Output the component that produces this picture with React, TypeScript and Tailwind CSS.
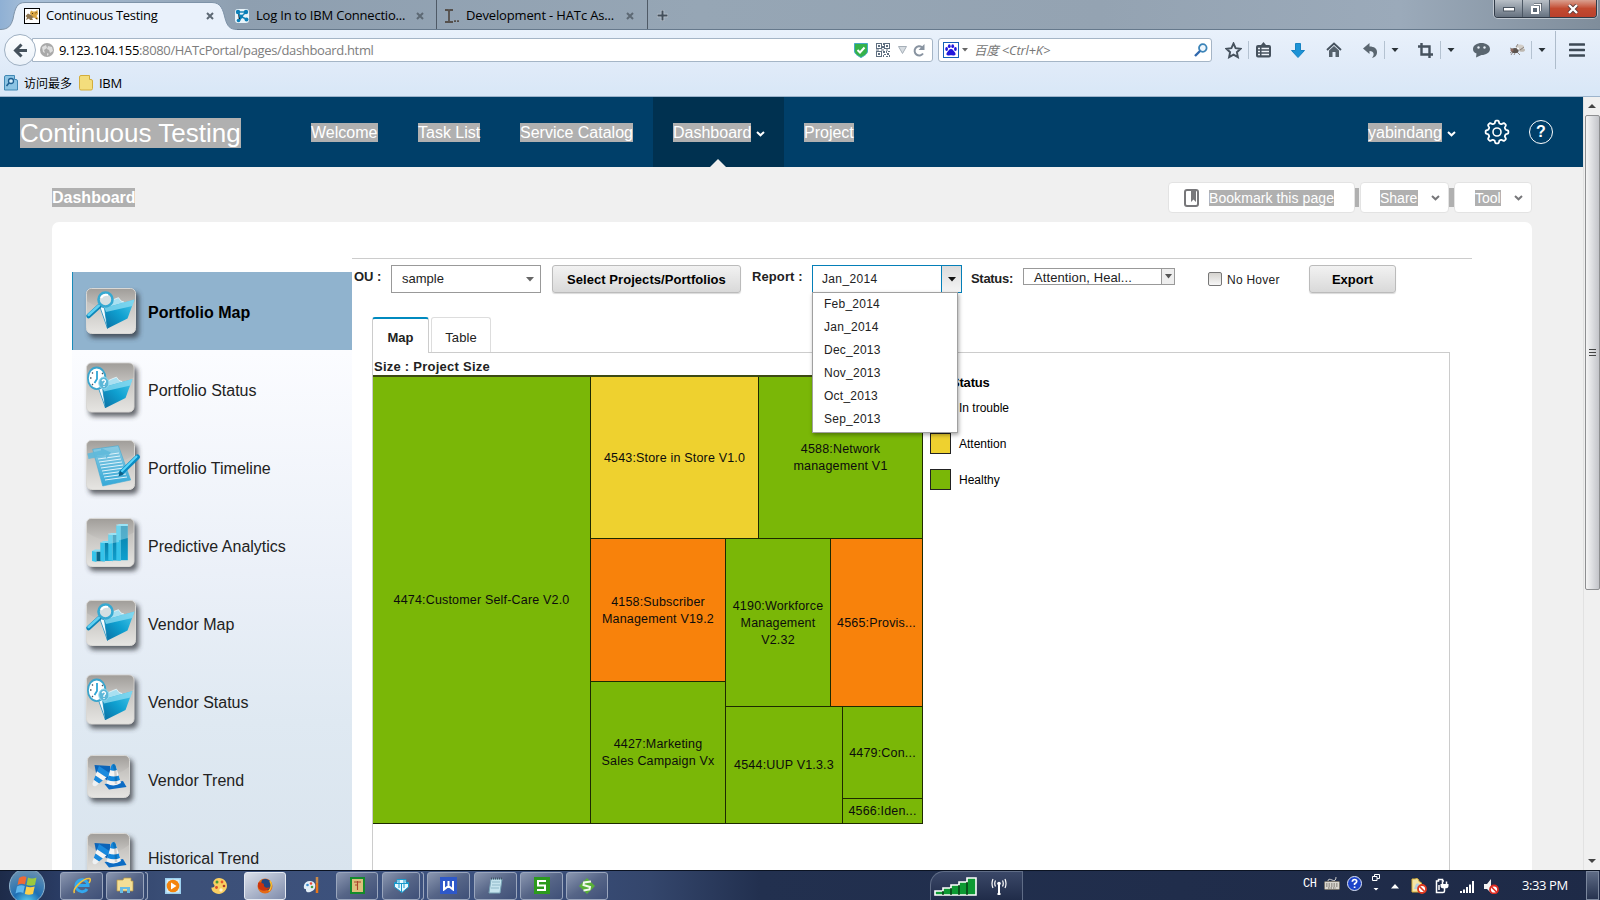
import React from "react";

const UI = "font-['Open_Sans','Noto_Sans_CJK_SC',sans-serif]";

/* ---------- Browser chrome ---------- */

function CloseX() {
  return (
    <svg width="8" height="8" viewBox="0 0 8 8" className="shrink-0">
      <path d="M1 1L7 7M7 1L1 7" stroke="#5d6974" strokeWidth="2" />
    </svg>
  );
}

function CatIcon() {
  return (
    <svg width="16" height="16" viewBox="0 0 16 16" className="shrink-0">
      <rect x=".5" y=".5" width="15" height="15" fill="#fff" stroke="#000" />
      <path d="M6 5L7 2.500L9 3.500H11L13.500 2L14 6L12.500 8L14.500 11H12L10 9.500L7 8.500Z" fill="#d9a441" />
      <path d="M1.500 8L4 5.500L7 7L10 9.500L8 10L9 12H6L5 10.500L2 12L3 9.500Z" fill="#8d7550" />
      <path d="M8 5L9 6M11.500 5L12.500 4.500M12 10L13 11.500" stroke="#4f3817" />
    </svg>
  );
}

function ConnectionsIcon() {
  return (
    <svg width="14" height="14" viewBox="0 0 14 14" className="shrink-0">
      <rect width="14" height="14" rx="3" fill="#e9f4fa" />
      <path d="M3 3L11 3M3 3L6 9L4 12M6 8L11 3M7 8L11 10" stroke="#1b86b8" strokeWidth="1.5" />
      <g fill="#0a7fb8">
        <circle cx="3" cy="3" r="2.2" />
        <circle cx="11" cy="3" r="2.2" />
        <circle cx="6" cy="7.5" r="2" />
        <circle cx="3.5" cy="11.5" r="1.8" />
        <circle cx="11.5" cy="10.5" r="2" />
      </g>
    </svg>
  );
}

function CursorIcon() {
  return (
    <svg width="15" height="14" viewBox="0 0 15 14" className="shrink-0">
      <path d="M0 1H3L4 2L5 1H8M4 2V12M0 13H3L4 12L5 13H8" stroke="#55504c" strokeWidth="1.8" fill="none" />
      <path d="M9 12.2H11M12 12.2H14" stroke="#55504c" strokeWidth="1.8" />
    </svg>
  );
}

function WindowControls() {
  return (
    <div className="mr-[3px] flex h-[18px] w-[103px] overflow-hidden rounded-b-[4px] border border-t-0 border-[#303b48] shadow-[0_0_0_1px_rgba(255,255,255,0.45)]">
      <div className="flex w-[28px] items-center justify-center border-r border-[#4c5764] bg-linear-to-b from-[#b9c0c7] via-[#8e98a3] to-[#66717f]">
        <svg width="12" height="6" viewBox="0 0 12 6"><rect x=".5" y="1.5" width="11" height="3.5" fill="#fff" stroke="#4a5460" /></svg>
      </div>
      <div className="flex w-[27px] items-center justify-center border-r border-[#4c5764] bg-linear-to-b from-[#b9c0c7] via-[#8e98a3] to-[#66717f]">
        <svg width="12" height="12" viewBox="0 0 12 12">
          <path d="M4 1.5H10.5V8" fill="none" stroke="#4a5460" strokeWidth="3" />
          <path d="M4 1.5H10.5V8" fill="none" stroke="#fff" strokeWidth="1.3" />
          <rect x="2" y="4" width="6" height="6" fill="#5a6674" stroke="#fff" strokeWidth="2" />
        </svg>
      </div>
      <div className="flex flex-1 items-center justify-center bg-linear-to-b from-[#d9a090] via-[#c24a30] to-[#b9402c]">
        <svg width="12" height="10" viewBox="0 0 12 10">
          <path d="M2 1L10 9M10 1L2 9" stroke="#5c3a3a" strokeWidth="4" />
          <path d="M2 1L10 9M10 1L2 9" stroke="#fff" strokeWidth="2.4" />
        </svg>
      </div>
    </div>
  );
}

function TabStrip() {
  return (
    <div className={`${UI} flex h-[30px] items-start border-b border-[#66798c] bg-[linear-gradient(90deg,#8fb0d4_0px,#a9c0d8_30px,#8e9fb0_240px,#96a6b5_700px,#94a3b2_1100px,#9baaba_1400px,#7f8d9b_1600px)] text-[13px] text-black`}>
      <div className="relative h-[31px] w-[237px] shrink-0">
        <svg width="237" height="31" viewBox="0 0 237 31" className="absolute inset-0">
          <path d="M0 29.5C8 29.5 11 26 13 19C15 8 17 2.500 25 2.500H212C221 2.500 223 10 225 18C227 26 230 29.500 237 29.500V31H0Z" fill="#e9f1fb" stroke="#7e93a8" />
          <rect y="30" width="237" height="1" fill="#e9f1fb" />
        </svg>
        <div className="relative flex h-[30px] items-center pl-[24px] pt-[1px]">
          <CatIcon />
          <span className="ml-[6px] w-[160px] whitespace-nowrap tracking-[-0.3px]">Continuous Testing</span>
          <CloseX />
        </div>
      </div>
      <div className="-ml-[2px] flex h-[29px] w-[202px] shrink-0 items-center border-r border-[#4f5a66] pt-[2px]">
        <ConnectionsIcon />
        <span className="ml-[7px] w-[160px] whitespace-nowrap tracking-[-0.2px]">Log In to IBM Connectio...</span>
        <CloseX />
      </div>
      <div className="flex h-[29px] w-[211px] shrink-0 items-center border-r border-[#4f5a66] pl-[8px] pt-[2px]">
        <CursorIcon />
        <span className="ml-[6px] w-[160px] whitespace-nowrap tracking-[-0.15px]">Development - HATc As...</span>
        <CloseX />
      </div>
      <svg width="11" height="11" viewBox="0 0 11 11" className="ml-[9px] mt-[10px]">
        <path d="M5.500 0V11M0 5.500H11" stroke="#fff" strokeOpacity=".4" strokeWidth="3.500" />
        <path d="M5.500 .5V10.500M.5 5.500H10.500" stroke="#434f5b" strokeWidth="2" />
      </svg>
      <div className="flex-1" />
      <WindowControls />
    </div>
  );
}

function Sep({ className = "" }: { className?: string }) {
  return <div className={`h-[18px] w-px shrink-0 bg-[#b4c2d1] ${className}`} />;
}

function Caret({ className = "" }: { className?: string }) {
  return (
    <svg width="8" height="4" viewBox="0 0 8 4" className={`shrink-0 ${className}`}>
      <path d="M.5 0H7.500L4 4Z" fill="#2a3238" />
    </svg>
  );
}

function QrIcon() {
  return (
    <svg width="14" height="14" viewBox="0 0 14 14" className="shrink-0">
      <g fill="none" stroke="#5f6f80">
        <rect x=".5" y=".5" width="5" height="5" />
        <rect x="8.500" y=".5" width="5" height="5" />
        <rect x=".5" y="8.500" width="5" height="5" />
      </g>
      <path fill="#5f6f80" d="M2 2h2v2H2zM10 2h2v2h-2zM2 10h2v2H2zM7 0h1v2H7zM6 3h2v2H6zM0 6.500h3v1H0zM5 6.500h3v1H5zM10 6.500h2v1h-2zM7 8h2v2H7zM10 8h1v2h-1zM12 8h2v1h-2zM8 11h2v1H8zM11 10h2v2h-2zM7 12h1v2H7zM10 13h2v1h-2zM13 12h1v2h-1z" />
    </svg>
  );
}

function NavBar() {
  return (
    <div className="flex h-[40px] items-center bg-linear-to-b from-[#e9f1fb] to-[#dfeaf8]">
      <div className="relative z-10 ml-[4px] flex h-[32px] w-[32px] shrink-0 items-center justify-center rounded-full border border-[#9fb0c2] bg-linear-to-b from-[#fdfeff] to-[#eaf1f9]">
        <svg width="15" height="15" viewBox="0 0 15 15">
          <path d="M8.500 1.500L2.500 7.500L8.500 13.500M3 7.500H14" fill="none" stroke="#45515c" strokeWidth="3" />
        </svg>
      </div>
      <div className={`${UI} -ml-[4px] flex h-[24px] w-[901px] shrink-0 items-center rounded-r-[3px] border border-[#a5b5c6] bg-white text-[13px] text-[#7d7d7d]`}>
        <svg width="14" height="14" viewBox="0 0 14 14" className="ml-[7px]">
          <circle cx="7" cy="7" r="7" fill="#a9a9a9" />
          <path d="M2 4L6 2L7 5L4 7L5 10L3 9ZM8 3L12 4L13 8L10 10L9 7L7 6ZM7 10L9 11L7 13Z" fill="#dedede" />
        </svg>
        <span className="ml-[5px] mt-[2px] w-[795px] whitespace-nowrap tracking-[-0.35px]">
          <span className="text-black">9.123.104.155</span>:8080/HATcPortal/pages/dashboard.html
        </span>
        <svg width="14" height="15" viewBox="0 0 14 15">
          <path d="M.5 .5H13.500V8C13.500 11 10 13 7 14.500C4 13 .5 11 .5 8Z" fill="#35b24a" stroke="#45a9c6" />
          <path d="M3.500 7L6 9.500L10.500 4.500" fill="none" stroke="#fff" strokeWidth="2" />
        </svg>
        <div className="w-[8px]" />
        <QrIcon />
        <svg width="9" height="8" viewBox="0 0 9 8" className="ml-[8px]">
          <path d="M.5 .5H8.500L4.500 7.500Z" fill="#d7dce1" stroke="#a6afb8" />
        </svg>
        <svg width="12" height="13" viewBox="0 0 12 13" className="ml-[6px]">
          <path d="M10 9.500A4.600 4.600 0 1 1 9 3.200" fill="none" stroke="#8893a0" strokeWidth="2" />
          <path d="M11.500 0V6H5.500Z" fill="#8893a0" />
        </svg>
      </div>
      <div className={`${UI} ml-[5px] flex h-[24px] w-[274px] shrink-0 items-center rounded-[3px] border border-[#a5b5c6] bg-white text-[13px] italic text-[#777]`}>
        <svg width="16" height="16" viewBox="0 0 16 16" className="ml-[4px]">
          <rect x=".5" y=".5" width="15" height="15" fill="#fff" stroke="#1560b8" />
          <g fill="#2319dc">
            <ellipse cx="3.600" cy="7" rx="1.400" ry="1.900" />
            <ellipse cx="6.300" cy="4.200" rx="1.400" ry="1.900" />
            <ellipse cx="9.700" cy="4.200" rx="1.400" ry="1.900" />
            <ellipse cx="12.400" cy="7" rx="1.400" ry="1.900" />
            <path d="M8 7C10 7 10.500 9 12 10.500C13.500 12.500 12 14 10 13.500C8.500 13 7.500 13 6 13.500C4 14 2.500 12.500 4 10.500C5.500 9 6 7 8 7Z" />
          </g>
        </svg>
        <svg width="6" height="4" viewBox="0 0 6 4" className="ml-[3px]"><path d="M0 0H6L3 3.500Z" fill="#666" /></svg>
        <span className="ml-[6px] mt-[2px] w-[219px] whitespace-nowrap tracking-[-0.2px]"><span className="text-[12.500px]">百度</span> &lt;Ctrl+K&gt;</span>
        <svg width="14" height="14" viewBox="0 0 14 14" className="ml-px">
          <circle cx="8.800" cy="5" r="3.800" fill="#eef6fd" stroke="#3c84b8" strokeWidth="1.800" />
          <path d="M6 8L1 13" stroke="#3168ad" strokeWidth="2.400" />
        </svg>
      </div>
      <svg width="17" height="17" viewBox="0 0 17 17" className="ml-[13px] shrink-0">
        <path d="M8.500 1.500L10.600 6.200L15.600 6.800L11.900 10.200L12.900 15.200L8.500 12.700L4.100 15.200L5.100 10.200L1.400 6.800L6.400 6.200Z" fill="none" stroke="#46525e" strokeWidth="1.900" />
      </svg>
      <Sep className="ml-[6px]" />
      <svg width="15" height="16" viewBox="0 0 15 16" className="ml-[7px] shrink-0">
        <path d="M2 3H5L7.500 0L10 3H13Q15 3 15 5V13.500Q15 15.500 13 15.500H2Q0 15.500 0 13.500V5Q0 3 2 3Z" fill="#46525e" />
        <path d="M2 6.500H4M5.500 6.500H13M2 9.500H4M5.500 9.500H13M2 12.500H4M5.500 12.500H13" stroke="#eef4fb" strokeWidth="1.600" />
      </svg>
      <svg width="14" height="15" viewBox="0 0 14 15" className="ml-[20px] shrink-0">
        <path d="M4.500 .5H9.500V7.500H13.500L7 14.500L.5 7.500H4.500Z" fill="#1c93d6" stroke="#1782c2" />
      </svg>
      <svg width="16" height="16" viewBox="0 0 16 16" className="ml-[21px] shrink-0">
        <path d="M1 8L8 1.500L15 8" fill="none" stroke="#46525e" strokeWidth="1.900" />
        <path d="M3 8.500L8 4L13 8.500V15H9.500V10H6.500V15H3Z" fill="#55616c" />
      </svg>
      <svg width="15" height="15" viewBox="0 0 15 15" className="ml-[21px] shrink-0">
        <path d="M0 5.500L6.500 0V3.500C11 3.500 14.500 5.500 14 10C13.700 12.500 12 14.500 9 15C11.500 12 11.500 8 6.500 8V11Z" fill="#5a6670" />
      </svg>
      <Sep className="ml-[6px]" />
      <Caret className="ml-[6px]" />
      <svg width="15" height="15" viewBox="0 0 15 15" className="ml-[19px] shrink-0">
        <path d="M0 3.500H11.500V15M3.500 0V11.500H15" fill="none" stroke="#46525e" strokeWidth="2.400" />
      </svg>
      <Sep className="ml-[7px]" />
      <Caret className="ml-[6px]" />
      <svg width="17" height="15" viewBox="0 0 17 15" className="ml-[18px] shrink-0">
        <path d="M8.500 0C13 0 17 2.500 17 6C17 9.500 13 12 8.500 12L3 14.500L3.500 10.500C1 9.500 0 8 0 6C0 2.500 4 0 8.500 0Z" fill="#5a6670" />
        <circle cx="5.500" cy="4.500" r="1.200" fill="#e5edf5" /><circle cx="11.500" cy="4.500" r="1.200" fill="#e5edf5" />
      </svg>
      <svg width="17" height="14" viewBox="0 0 17 14" className="ml-[19px] shrink-0">
        <ellipse cx="11" cy="4" rx="4" ry="2.500" fill="#d2cec8" />
        <ellipse cx="13" cy="7" rx="3" ry="1.800" fill="#bdb8b1" />
        <path d="M1 10L5 7L1 5M5 12L7 8L11 12M7 4L9 1M11 7L15 4M4 9L2 12" stroke="#7a716b" strokeWidth=".8" fill="none" />
        <ellipse cx="6" cy="7.500" rx="3.600" ry="2.600" fill="#5c544f" />
        <circle cx="3" cy="7" r="1.600" fill="#8d6a60" />
        <circle cx="9" cy="5.500" r="1" fill="#fff" />
      </svg>
      <Sep className="ml-[5px]" />
      <Caret className="ml-[6px]" />
      <div className="ml-[9px] h-[38px] w-px bg-[#aebccb]" />
      <svg width="16" height="14" viewBox="0 0 16 14" className="ml-[13px] shrink-0">
        <path d="M1 1.500H15M1 7H15M1 12.500H15" stroke="#3e4a55" strokeWidth="2.600" strokeLinecap="round" />
      </svg>
    </div>
  );
}

function BookmarksBar() {
  return (
    <div className={`${UI} flex h-[27px] items-center border-b border-[#9db4cc] bg-linear-to-b from-[#dfeaf8] to-[#d8e7f7] text-[13px] text-black`}>
      <svg width="14" height="16" viewBox="0 0 14 16" className="ml-[4px]">
        <path d="M.5 2Q.5 .5 2 .5H10.500V4.500H12Q13.500 4.500 13.500 6V15H.5Z" fill="#8cc4e4" stroke="#4088b4" />
        <circle cx="7" cy="6" r="2.500" fill="#d7eefb" stroke="#1d5f92" strokeWidth="1.300" />
        <path d="M5 8L2.500 11" stroke="#1d5f92" strokeWidth="1.500" />
      </svg>
      <span className="ml-[6px] mt-[2px] whitespace-nowrap text-[12px]">访问最多</span>
      <svg width="14" height="16" viewBox="0 0 14 16" className="ml-[7px]">
        <path d="M.5 2Q.5 .5 2 .5H10.500V4.500H12Q13.500 4.500 13.500 6V13.500Q13.500 15 12 15H2Q.5 15 .5 13.500Z" fill="#f3dd7c" stroke="#d3ad3c" />
      </svg>
      <span className="ml-[6px] mt-[2px] tracking-[-0.3px]">IBM</span>
    </div>
  );
}

/* ---------- Site header ---------- */

function Chevron({ color = "#fff", className = "" }: { color?: string; className?: string }) {
  return (
    <svg width="9" height="6" viewBox="0 0 9 6" className={`shrink-0 ${className}`}>
      <path d="M1 1L4.500 4.300L8 1" fill="none" stroke={color} strokeWidth="2" />
    </svg>
  );
}

function gearPath(cx: number, cy: number, inner: number, outer: number, teeth: number) {
  const steps = 160;
  const points: string[] = [];
  for (let i = 0; i < steps; i++) {
    const a = (i / steps) * Math.PI * 2;
    const t = (Math.tanh(Math.cos(a * teeth) * 2.4) + 1) / 2;
    const r = inner + (outer - inner) * t;
    points.push(`${(cx + r * Math.sin(a)).toFixed(2)} ${(cy - r * Math.cos(a)).toFixed(2)}`);
  }
  return `M${points.join("L")}Z`;
}

function Gear() {
  return (
    <svg width="26" height="26" viewBox="0 0 26 26" className="shrink-0" fill="none" stroke="#fff" strokeWidth="1.800">
      <path d={gearPath(13, 13, 8.8, 11.4, 8)} strokeLinejoin="round" />
      <circle cx="13" cy="13" r="4" strokeWidth="1.600" />
    </svg>
  );
}

function Marked({ children, className = "" }: { children: React.ReactNode; className?: string }) {
  return <span className={`block shrink-0 whitespace-nowrap bg-[#b0b0b0] text-white ${className}`}>{children}</span>;
}

function SiteHeader() {
  return (
    <header className="flex h-[70px] shrink-0 items-center bg-[#003f69] text-[16px]">
      <Marked className="mt-[2px] ml-[20px] h-[30px] w-[221px] text-[26px] leading-[30px]">Continuous Testing</Marked>
      <Marked className="mt-[1px] ml-[70px] h-[19px] w-[67px] leading-[19px]">Welcome</Marked>
      <Marked className="mt-[1px] ml-[40px] h-[19px] w-[62px] leading-[19px]">Task List</Marked>
      <Marked className="mt-[1px] ml-[40px] h-[19px] w-[113px] leading-[19px]">Service Catalog</Marked>
      <div className="relative ml-[20px] flex h-full w-[131px] items-center bg-[#003150] pl-[20px]">
        <Marked className="mt-[1px] h-[19px] w-[78px] leading-[19px]">Dashboard</Marked>
        <Chevron className="mt-[4px] ml-[5px]" />
        <svg width="16" height="8" viewBox="0 0 16 8" className="absolute bottom-0 left-[57px]"><path d="M0 8L8 0L16 8Z" fill="#f0f0f0" /></svg>
      </div>
      <Marked className="mt-[1px] ml-[20px] h-[19px] w-[50px] leading-[19px]">Project</Marked>
      <div className="flex-1" />
      <Marked className="mt-[1px] h-[19px] w-[74px] leading-[19px]">yabindang</Marked>
      <Chevron className="mt-[4px] ml-[5px]" />
      <div className="ml-[28px]"><Gear /></div>
      <div className="mr-[30px] ml-[19px] flex h-[24px] w-[24px] shrink-0 items-center justify-center rounded-full border-[1.500px] border-white text-[16px] font-bold leading-none text-white">?</div>
    </header>
  );
}

function TitleRow() {
  return (
    <div className="flex h-[55px] shrink-0 items-start text-[14px]">
      <Marked className="ml-[52px] mt-[21px] h-[19px] w-[83px] text-[16px] font-bold leading-[19px]">Dashboard</Marked>
      <div className="flex-1" />
      <div className="mr-[51px] mt-[15px] flex h-[31px] items-center">
        <div className="flex h-[31px] w-[187px] items-center rounded-[4px] border border-[#e3e3e3] bg-white pl-[15px]">
          <svg width="15" height="18" viewBox="0 0 15 18">
            <rect x="1" y="1" width="13" height="16" rx="2" fill="#fff" stroke="#77777a" strokeWidth="2" />
            <path d="M7 2H12V13L9.500 10.500L7 13Z" fill="#77777a" />
          </svg>
          <Marked className="ml-[10px] mt-[1px] h-[16px] w-[125px] leading-[16px] tracking-[0.07px]">Bookmark this page</Marked>
        </div>
        <div className="h-[19px] w-[4px] bg-[#b0b0b0]" />
        <div className="ml-px flex h-[31px] w-[89px] items-center rounded-[4px] border border-[#e3e3e3] bg-white pl-[19px]">
          <Marked className="mt-[1px] h-[16px] w-[38px] leading-[16px]">Share</Marked>
          <Chevron color="#77777a" className="ml-[13px]" />
        </div>
        <div className="h-[19px] w-[5px] bg-[#b0b0b0]" />
        <div className="flex h-[31px] w-[78px] items-center rounded-[4px] border border-[#e3e3e3] bg-white pl-[20px]">
          <Marked className="mt-[1px] h-[16px] w-[26px] leading-[16px]">Tool</Marked>
          <Chevron color="#77777a" className="ml-[13px]" />
        </div>
      </div>
    </div>
  );
}

/* ---------- Sidebar ---------- */

function Tile({ x, y, w, h }: { x: number; y: number; w: number; h: number }) {
  const m = y + h * 0.42;
  return (
    <g>
      <rect x={x + 3} y={y + 4} width={w} height={h} rx="5" fill="#30343a" opacity=".75" filter="url(#soft)" />
      <rect x={x + 0.5} y={y + 0.5} width={w - 1} height={h - 1} rx="5" fill="url(#tileLow)" stroke="#d9d8d5" />
      <path d={`M${x + 1} ${m - 6}V${y + 6}Q${x + 1} ${y + 1} ${x + 6} ${y + 1}H${x + w - 6}Q${x + w - 1} ${y + 1} ${x + w - 1} ${y + 6}V${m - 6}Q${x + w / 2} ${m + 10} ${x + 1} ${m - 6}Z`} fill="url(#tileHigh)" />
    </g>
  );
}

function Folder() {
  return (
    <g>
      <path d="M19.500 34L35 27L38.500 25.700L41 29L44 30L47 44L27 56Z" fill="#a9e0f1" stroke="#e8f7fc" strokeWidth=".8" />
      <path d="M19.500 34L24.500 36L27.500 56.500Z" fill="#f4fbfe" stroke="#1a85b3" strokeWidth=".8" />
      <path d="M24.500 36L54.500 27.500L47.500 46.500L27.500 56.500Z" fill="url(#folder)" />
      <path d="M24.500 36L54.500 27.500L52.500 34L26 40Z" fill="#8fdcf2" opacity=".75" />
    </g>
  );
}

function MapGlyph() {
  return (
    <g>
      <Tile x={6} y={16} w={50} h={46} />
      <Folder />
      <path d="M19.500 34L8.500 44" stroke="#0d86b8" strokeWidth="4.500" strokeLinecap="round" />
      <path d="M19 33.500L8.500 43" stroke="#5fd0f2" strokeWidth="2.500" strokeLinecap="round" />
      <circle cx="25.500" cy="27.500" r="7" fill="#d4dfe2" stroke="#35a9d2" strokeWidth="2.600" />
      <path d="M21 26Q23 22 28 23" stroke="#fff" strokeWidth="2" fill="none" />
    </g>
  );
}

function StatusGlyph() {
  return (
    <g>
      <Tile x={6} y={12.5} w={48.5} h={50} />
      <g transform="translate(-2 1.500)"><Folder /></g>
      <ellipse cx="16.700" cy="28.300" rx="8.800" ry="10.800" fill="#fff" stroke="#3ba5cd" strokeWidth="1.800" />
      <path d="M17 21V29L14.500 33" stroke="#2fa5d5" strokeWidth="1.800" fill="none" />
      <path d="M12 22.500L13 23.500M10 28H11.500M22 24L23 23M12 35L13 34" stroke="#456" strokeWidth="1.300" />
      <ellipse cx="23.800" cy="33" rx="5" ry="6" fill="#5cb7d8" stroke="#93d9ee" />
      <path d="M22 31Q24 28.500 25.500 31Q25.500 32.500 24 33.500V35M24 36V37" stroke="#fff" strokeWidth="1.300" fill="none" />
    </g>
  );
}

function TimelineGlyph() {
  return (
    <g>
      <Tile x={6} y={12} w={49} h={50} />
      <path d="M12.700 21.300L38.300 17.700L50.700 52L22.700 58Z" fill="url(#sheet)" stroke="#3fa9d3" strokeWidth=".6" />
      <path d="M17 28L39 25M18 31L40 28M19 34L41 31M20 37L42 34M21 40L43 37M22 43L44 40M23 46L45 43M24 49L46 46M25 52L47 49" stroke="#dff3fb" strokeWidth="1" />
      <path d="M7.500 25.500L21 22.500V20L31 24.500L26 31V27.500L8.500 31Z" fill="#5fb9da" opacity=".9" />
      <path d="M57.500 29L41 45" stroke="#0a8cc4" strokeWidth="5" strokeLinecap="round" />
      <path d="M56.500 28.500L42 43" stroke="#5ad6fa" strokeWidth="2" strokeLinecap="round" />
      <path d="M38.500 48.500L40 43L44 46Z" fill="#0f5f85" />
    </g>
  );
}

function BarsGlyph() {
  const bars = [
    [12, 44, 56], [20.3, 35.5, 55.7], [28.3, 27.5, 55.3], [36.3, 18.5, 55],
  ];
  return (
    <g>
      <Tile x={6} y={12} w={48.5} h={49} />
      {bars.map(([x, t, b], i) => (
        <g key={x}>
          <path d={`M${x} ${t + 1}L${x + 4.500} ${t + 1.500}V${b}L${x} ${b - 1}Z`} fill="#35c3ea" />
          <path d={`M${x + 4.500} ${t + 1.500}H${x + 11.500}V${b - 0.800}H${x + 4.500}Z`} fill={i === 0 ? "#0a6688" : "url(#bar)"} />
          <path d={`M${x} ${t + 1}L${x + 3} ${t - 0.500}H${x + 11.500}V${t + 1.500}H${x + 4.500}Z`} fill="#7fdcf5" />
        </g>
      ))}
      <path d="M28.300 27H39V36L28.300 38ZM36.300 18H48V32L36.300 35Z" fill="#c9eef8" opacity=".38" />
    </g>
  );
}

function ConesGlyph() {
  return (
    <g>
      <Tile x={7} y={15} w={43} h={43} />
      <path d="M14.500 25L30 26L32 36L28 41L16 33Z" fill="#0c64b8" />
      <path d="M19 26L31 34L26.500 37.600L17 31.300Z" fill="#1a8ade" />
      <path d="M17 31.300L26.500 37.600L22.800 40.600L15.400 35.600Z" fill="#f6f6f4" />
      <path d="M15.400 35.600L22.800 40.600L19 43.600L13.800 40Z" fill="#1a8ade" />
      <path d="M13.800 40L19 43.600L16 46Q12.500 47 12.500 43.500Z" fill="#eef1f3" />
      <path d="M24.500 44L43 41L46.500 47L29 49.500Z" fill="#0d6cc4" />
      <path d="M31.500 25Q33.500 23 35.500 25L41 43Q34 47.500 26.500 43.500Z" fill="#f4f4f4" />
      <path d="M31.500 25Q33.500 23 35.500 25L37 30Q33.500 31.500 30 30ZM28.500 35.500Q34 37.500 38.700 35.500L40 40Q34 42.500 27.500 40Z" fill="#1186dc" />
      <path d="M33.500 24Q36 30 36 44" stroke="#000" strokeOpacity=".15" strokeWidth="2.500" fill="none" />
    </g>
  );
}

const menu = [
  { label: "Portfolio Map", Glyph: MapGlyph },
  { label: "Portfolio Status", Glyph: StatusGlyph },
  { label: "Portfolio Timeline", Glyph: TimelineGlyph },
  { label: "Predictive Analytics", Glyph: BarsGlyph },
  { label: "Vendor Map", Glyph: MapGlyph },
  { label: "Vendor Status", Glyph: StatusGlyph },
  { label: "Vendor Trend", Glyph: ConesGlyph },
  { label: "Historical Trend", Glyph: ConesGlyph },
];

function GlyphDefs() {
  return (
    <svg width="0" height="0" className="absolute">
      <defs>
        <linearGradient id="tileLow" x1="0" y1="0" x2="0" y2="1"><stop offset="0" stopColor="#b5b2ae" /><stop offset="1" stopColor="#e6e5e2" /></linearGradient>
        <linearGradient id="tileHigh" x1="0" y1="0" x2="0" y2="1"><stop offset="0" stopColor="#a19e9a" /><stop offset="1" stopColor="#c9c7c4" /></linearGradient>
        <linearGradient id="folder" x1="0" y1="1" x2="1" y2="0"><stop offset="0" stopColor="#0a6fa3" /><stop offset=".5" stopColor="#0fa0d0" /><stop offset="1" stopColor="#4cc8ea" /></linearGradient>
        <linearGradient id="sheet" x1="0" y1="0" x2="0" y2="1"><stop offset="0" stopColor="#8ccbe2" /><stop offset="1" stopColor="#35a9d8" /></linearGradient>
        <linearGradient id="bar" x1="0" y1="0" x2="0" y2="1"><stop offset="0" stopColor="#0a7ea6" /><stop offset="1" stopColor="#0fa0cf" /></linearGradient>
        <filter id="soft" x="-30%" y="-30%" width="160%" height="160%"><feGaussianBlur stdDeviation="2.500" /></filter>
      </defs>
    </svg>
  );
}

function Sidebar() {
  return (
    <nav className="mt-[50px] h-[800px] w-[280px] shrink-0 bg-[linear-gradient(180deg,#fdfeff_0px,#fbfcff_80px,#ebf0f8_300px,#dfe9f2_450px,#d9e4ee_600px,#d3dfea_800px)] text-[16px] text-[#222]">
      {menu.map(({ label, Glyph }, i) => (
        <div
          key={label}
          className={
            i === 0
              ? "flex h-[78px] items-center border-l border-[#1a8ab8] bg-[#90b3ce] pl-[7px] font-bold text-black"
              : "flex h-[78px] items-center pl-[8px]"
          }
        >
          <svg width="68" height="78" viewBox="0 0 68 78" className="shrink-0"><Glyph /></svg>
          <span className="mt-[4px] whitespace-nowrap">{label}</span>
        </div>
      ))}
    </nav>
  );
}

/* ---------- Filters, tabs, tree map ---------- */

const months = ["Feb_2014", "Jan_2014", "Dec_2013", "Nov_2013", "Oct_2013", "Sep_2013"];

function Filters() {
  return (
    <div className="flex h-[59px] w-[1120px] items-start border-t border-[#ccc] text-[13px] text-[#222]">
      <span className="ml-[2px] mt-[8px] w-[37px] whitespace-nowrap font-bold">OU :</span>
      <div className="mt-[6px] flex h-[28px] w-[150px] items-center justify-between border border-[#999] bg-white pl-[10px] pr-[6px] text-[13px]">
        <span>sample</span>
        <svg width="8" height="5" viewBox="0 0 8 5"><path d="M0 0H8L4 4.500Z" fill="#666" /></svg>
      </div>
      <button className="ml-[11px] mt-[6px] h-[28px] w-[189px] whitespace-nowrap rounded-[3px] border border-[#bbb] bg-linear-to-b from-[#f2f2f2] to-[#d9d9d9] pt-px text-[13px] font-bold tracking-[0.05px] text-black shadow-[0_1px_1px_rgba(0,0,0,0.15)]">Select Projects/Portfolios</button>
      <span className="ml-[11px] mt-[8px] w-[60px] whitespace-nowrap font-bold tracking-[0.1px]">Report :</span>
      <div className="relative mt-[6px] flex h-[28px] w-[150px] items-center border border-[#057fb8] bg-white pl-[9px]">
        <span className="w-[119px] text-[12px] tracking-[0.35px]">Jan_2014</span>
        <div className="flex h-full flex-1 items-center justify-center border-l border-[#057fb8] bg-linear-to-b from-[#dcdcdc] to-[#f4f4f4]">
          <svg width="8" height="5" viewBox="0 0 8 5"><path d="M0 0H8L4 4.500Z" fill="#111" /></svg>
        </div>
        <ul className="absolute -left-px top-[26px] z-20 h-[141px] w-[146px] border border-[#a0a0a0] bg-white text-[12px] tracking-[0.25px] shadow-[1px_2px_4px_rgba(0,0,0,0.35)]">
          {months.map((m) => (
            <li key={m} className="h-[23px] pl-[11px] leading-[23px]">{m}</li>
          ))}
        </ul>
      </div>
      <span className="ml-[9px] mt-[10px] w-[52px] whitespace-nowrap text-[13px] font-bold tracking-[-0.3px]">Status:</span>
      <div className="mt-[9px] flex h-[17px] w-[152px] items-start overflow-hidden border border-[#999] bg-white">
        <span className="w-[137px] whitespace-nowrap pl-[10px] leading-[17px] tracking-[0.1px]">Attention, Heal...</span>
        <div className="flex h-full flex-1 items-start justify-center border-l border-[#999] bg-[#eee] pt-[5px]">
          <svg width="7" height="5" viewBox="0 0 7 5"><path d="M0 0H7L3.500 4.500Z" fill="#555" /></svg>
        </div>
      </div>
      <div className="ml-[33px] mt-[13px] h-[14px] w-[14px] rounded-[2px] border border-[#777] bg-linear-to-b from-[#d5d3cf] to-[#f7f7f7]" />
      <span className="ml-[5px] mt-[12px] w-[82px] whitespace-nowrap text-[12px] tracking-[0.25px]">No Hover</span>
      <button className="mt-[6px] h-[28px] w-[87px] rounded-[3px] border border-[#bbb] bg-linear-to-b from-[#f2f2f2] to-[#d9d9d9] pt-px text-[13px] font-bold text-black shadow-[0_1px_1px_rgba(0,0,0,0.15)]">Export</button>
    </div>
  );
}

const GREEN = "bg-[#7ab707]";
const YELLOW = "bg-[#eed12f]";
const ORANGE = "bg-[#f8820b]";

function Cell({ size, color, lines }: { size: string; color: string; lines: string[] }) {
  return (
    <div className={`flex shrink-0 flex-col items-center justify-center border-r border-b border-[#1d2a00] pt-px text-center text-[12.500px] leading-[17px] tracking-[0.18px] text-[#0c0c0c] ${size} ${color}`}>
      {lines.map((l) => (
        <span key={l} className="whitespace-nowrap">{l}</span>
      ))}
    </div>
  );
}

function TreeMap() {
  return (
    <div className="flex h-[449px] w-[550px] shrink-0 border-t-2 border-[#3d4a14]">
      <Cell size="h-[447px] w-[218px]" color={GREEN} lines={["4474:Customer Self-Care V2.0"]} />
      <div className="flex w-[332px] flex-col">
        <div className="flex">
          <Cell size="h-[162px] w-[168px]" color={YELLOW} lines={["4543:Store in Store V1.0"]} />
          <Cell size="h-[162px] w-[164px]" color={GREEN} lines={["4588:Network", "management V1"]} />
        </div>
        <div className="flex">
          <div className="flex w-[135px] flex-col">
            <Cell size="h-[143px] w-[135px]" color={ORANGE} lines={["4158:Subscriber", "Management V19.2"]} />
            <Cell size="h-[142px] w-[135px]" color={GREEN} lines={["4427:Marketing", "Sales Campaign Vx"]} />
          </div>
          <div className="flex w-[197px] flex-col">
            <div className="flex">
              <Cell size="h-[168px] w-[105px]" color={GREEN} lines={["4190:Workforce", "Management", "V2.32"]} />
              <Cell size="h-[168px] w-[92px]" color={ORANGE} lines={["4565:Provis..."]} />
            </div>
            <div className="flex">
              <Cell size="h-[117px] w-[117px]" color={GREEN} lines={["4544:UUP V1.3.3"]} />
              <div className="flex flex-col">
                <Cell size="h-[92px] w-[80px]" color={GREEN} lines={["4479:Con..."]} />
                <Cell size="h-[25px] w-[80px]" color={GREEN} lines={["4566:Iden..."]} />
              </div>
            </div>
          </div>
        </div>
      </div>
    </div>
  );
}

function Legend() {
  const rows = [
    { label: "In trouble", color: ORANGE },
    { label: "Attention", color: YELLOW },
    { label: "Healthy", color: GREEN },
  ];
  return (
    <div className="ml-[7px] mt-px text-[12px] text-black">
      <div className="ml-[21px] h-[21px] text-[13px] font-bold leading-[14px] tracking-[-0.2px]">Status</div>
      <div className="flex flex-col gap-[15px]">
        {rows.map((r) => (
          <div key={r.label} className="flex h-[21px] items-center">
            <div className={`h-[21px] w-[21px] border border-[#222] ${r.color}`} />
            <span className="ml-[8px]">{r.label}</span>
          </div>
        ))}
      </div>
    </div>
  );
}

function Main() {
  return (
    <main className="mt-[36px] w-[1120px]">
      <Filters />
      <div className="ml-[20px] flex w-[1078px] items-end text-[13px] text-[#222]">
        <div className="h-[36px] w-[57px] rounded-t-[3px] border-x border-t-2 border-x-[#ccc] border-t-[#008abf] bg-white pt-[9px] text-center font-bold">Map</div>
        <div className="flex h-[36px] flex-1 border-b border-[#ccc]">
          <div className="ml-[2px] h-[35px] w-[60px] rounded-t-[3px] border border-b-0 border-[#ddd] pt-[10px] text-center tracking-[0.1px]">Table</div>
        </div>
      </div>
      <div className="ml-[20px] h-[600px] w-[1078px] border-x border-[#ccc]">
        <div className="h-[22px] pl-px pt-[4px] text-[13px] font-bold tracking-[0.25px] text-[#222]">Size : Project Size</div>
        <div className="flex items-start">
          <TreeMap />
          <Legend />
        </div>
      </div>
    </main>
  );
}

function Scrollbar() {
  return (
    <div className="flex w-[17px] shrink-0 flex-col items-center border-l border-[#e2e2e2] bg-[#f0f0f0]">
      <svg width="8" height="4" viewBox="0 0 8 4" className="mt-[7px] shrink-0"><path d="M0 4L4 0L8 4Z" fill="#444" /></svg>
      <div className="mt-[7px] flex h-[475px] w-[15px] shrink-0 items-center justify-center rounded-[2px] border border-[#8e8f91] bg-linear-to-r from-[#f5f5f5] via-[#dcdde0] to-[#c3c4c9]">
        <svg width="7" height="7" viewBox="0 0 7 7"><path d="M0 .5H7M0 3.500H7M0 6.500H7" stroke="#444" /></svg>
      </div>
      <div className="flex-1" />
      <svg width="8" height="4" viewBox="0 0 8 4" className="mb-[7px] shrink-0"><path d="M0 0L4 4L8 0Z" fill="#444" /></svg>
    </div>
  );
}

/* ---------- Taskbar ---------- */

function TaskButton({ width, gap, active, plain, children }: { width: string; gap: string; active?: boolean; plain?: boolean; children: React.ReactNode }) {
  const look = plain
    ? ""
    : active
      ? "border border-[#e4e9f2] bg-linear-to-br from-[#dbe0ea] to-[#7f8cab]"
      : "border border-[#9aa6bd] bg-linear-to-br from-[#8b97b0] via-[#566587] to-[#3f5078]";
  return <div className={`flex h-[28px] shrink-0 items-center justify-center rounded-[3px] ${width} ${gap} ${look}`}>{children}</div>;
}

function StackEdge() {
  return <div className="ml-px h-[28px] w-[3px] shrink-0 rounded-r-[3px] border border-l-0 border-[#9aa6bd]" />;
}

function Taskbar() {
  return (
    <footer className="flex h-[30px] shrink-0 items-center overflow-hidden border-t border-[#0b1322] bg-[linear-gradient(90deg,#1d2b49_0px,#2a3c64_60px,#3c5078_180px,#3d5280_500px,#34466c_650px,#22304f_760px,#1e2a47_1600px)]">
      <div className="w-[60px] shrink-0">
        <svg width="38" height="30" viewBox="0 0 38 30" className="ml-[8px]">
          <defs><radialGradient id="orb" cx=".5" cy="1" r="1"><stop offset="0" stopColor="#5fd9f7" /><stop offset=".4" stopColor="#1e6fb4" /><stop offset="1" stopColor="#6f93b0" /></radialGradient></defs>
          <circle cx="19" cy="15" r="17.500" fill="url(#orb)" stroke="#8fb4cf" />
          <path d="M11 7Q15 4 18.500 6L17 13.500Q13.500 12 9.500 14Z" fill="#ee6a35" />
          <path d="M20 6.500Q24 8.500 28.500 6.500L27 14Q23 15.500 18.500 14Z" fill="#9cc93f" />
          <path d="M9 15.500Q13 13.500 16.800 15L15.300 22Q12 20.500 7.500 22.500Z" fill="#5fb7ee" />
          <path d="M18.300 15.500Q22 17 26.700 15.500L25 23Q21 24.500 16.800 23Z" fill="#fbd04c" />
        </svg>
      </div>
      <TaskButton width="w-[43px]" gap="">
        <svg width="18" height="17" viewBox="0 0 18 17">
          <path d="M14 12A6 6 0 1 1 15 8.500H5" fill="none" stroke="#32a8ee" strokeWidth="3" />
          <path d="M1.500 16C-1 12 10 1 16.500 1.500C18 2 17 4.500 16 6" fill="none" stroke="#f3c33c" strokeWidth="1.600" />
        </svg>
      </TaskButton>
      <TaskButton width="w-[38px]" gap="ml-[3px]">
        <svg width="18" height="17" viewBox="0 0 18 17">
          <path d="M1 3H7L8 1H15V4H17V14H1Z" fill="#f4df96" stroke="#b8963f" strokeWidth=".7" />
          <path d="M4 16V10H14V16H11V12H7V16Z" fill="#68bce4" />
        </svg>
      </TaskButton>
      <StackEdge />
      <TaskButton width="w-[40px]" gap="ml-[5px]" plain>
        <svg width="16" height="16" viewBox="0 0 16 16">
          <rect width="16" height="16" fill="#9dd0ef" /><rect x="1.500" y="1.500" width="13" height="13" fill="#d8effa" />
          <circle cx="8" cy="8" r="6.300" fill="#f4840d" /><path d="M6 4.500L11.500 8L6 11.500Z" fill="#fff" />
        </svg>
      </TaskButton>
      <TaskButton width="w-[40px]" gap="ml-[6px]" plain>
        <svg width="16" height="16" viewBox="0 0 16 16">
          <path d="M8 0C13 0 16 4 16 8S12 16 8 16C3 16 0 12 .5 9.500C2.500 10 4.500 8.500 3 6.500C1 5 3 0 8 0Z" fill="#fbcf62" />
          <circle cx="6" cy="4" r="1.500" fill="#4a9a35" /><circle cx="11" cy="4" r="1.400" fill="#e95a2b" /><circle cx="13" cy="8" r="1.300" fill="#b43b24" /><circle cx="5.500" cy="9.500" r="1.400" fill="#d94b2b" /><circle cx="10" cy="12" r="1.700" fill="#fff2cc" />
        </svg>
      </TaskButton>
      <TaskButton width="w-[42px]" gap="ml-[5px]" active>
        <svg width="16" height="16" viewBox="0 0 16 16">
          <circle cx="8" cy="8" r="7.500" fill="#e56a15" /><path d="M5 2C9 -1 16 3 14.500 9C13.500 13 8 13 7 10C5 9 3 7 5 2Z" fill="#22457f" />
          <path d="M1 5C3 3 5 5 7 6C6 9 10 11 13 9C11 14 3 14 1 9Z" fill="#c9340f" /><path d="M13 3Q16 8 12 13" stroke="#fbc02d" strokeWidth="1.500" fill="none" />
        </svg>
      </TaskButton>
      <TaskButton width="w-[40px]" gap="ml-[5px]" plain>
        <svg width="17" height="17" viewBox="0 0 17 17">
          <path d="M7 4C12 4 13 8 12 11S6 16 4 15S4 12 2 12S0 4 7 4Z" fill="#e3eef7" />
          <circle cx="4.500" cy="8" r="1.300" fill="#3a8dd0" /><circle cx="8" cy="6.500" r="1.300" fill="#e64f3c" /><circle cx="9" cy="10" r="1.300" fill="#47a044" />
          <path d="M14 0V6" stroke="#c98a4a" strokeWidth="2.500" /><path d="M14 6V16" stroke="#e8761a" strokeWidth="2.500" />
        </svg>
      </TaskButton>
      <TaskButton width="w-[42px]" gap="ml-[5px]">
        <svg width="15" height="17" viewBox="0 0 15 17"><rect x="1" y="1" width="13" height="15" fill="#dcc07c" stroke="#138a2c" strokeWidth="2" /><path d="M4 5H11M7.500 4V13M5 8H8" stroke="#a8452a" strokeWidth="1.100" /></svg>
      </TaskButton>
      <TaskButton width="w-[38px]" gap="ml-[4px]">
        <svg width="15" height="14" viewBox="0 0 15 14"><path d="M3 .5H12V3.500H14.500V8L8 13.500L.5 8V3.500H3Z" fill="#e8f8ff" stroke="#1899cc" /><path d="M1 4.500H14M5 1V9M7.500 5V13M10 1V9" stroke="#1899cc" /></svg>
      </TaskButton>
      <StackEdge />
      <TaskButton width="w-[43px]" gap="ml-[3px]">
        <div className="flex h-[17px] w-[17px] items-center justify-center bg-[#2e58c9]">
          <svg width="11" height="10" viewBox="0 0 11 10"><path d="M1 0V8.500L5.500 5L10 8.500V0M5.500 0V6" fill="none" stroke="#fff" strokeWidth="2" /></svg>
        </div>
      </TaskButton>
      <TaskButton width="w-[43px]" gap="ml-[4px]">
        <svg width="15" height="17" viewBox="0 0 15 17"><path d="M3 2H14L12 16H1Z" fill="#c5e4ee" stroke="#7aa6b8" /><path d="M4 5H12M4 8H12M3 11H11" stroke="#8fb8c8" /><path d="M3 1.500H14" stroke="#456" strokeDasharray="1 1" strokeWidth="2" /></svg>
      </TaskButton>
      <TaskButton width="w-[43px]" gap="ml-[3px]">
        <div className="flex h-[17px] w-[16px] items-center justify-center bg-[#2c9a1d]">
          <svg width="9" height="11" viewBox="0 0 9 11"><path d="M9 1H1V5.500H8V10H0" fill="none" stroke="#fff" strokeWidth="2" /></svg>
        </div>
      </TaskButton>
      <TaskButton width="w-[42px]" gap="ml-[3px]">
        <svg width="16" height="16" viewBox="0 0 16 16"><path d="M8 0L16 8L8 16L0 8Z" fill="#58b038" /><path d="M12 3.500L5 4.500L4.500 7L11 9L10.500 11.500L4.500 12.500" fill="none" stroke="#f1f8ec" strokeWidth="2" /></svg>
      </TaskButton>
      <div className="ml-[322px] flex h-[29px] w-[93px] shrink-0 items-center rounded-tl-[14px] border border-b-0 border-[#5f6c86] bg-linear-to-b from-[#3b4868] to-[#202c49] pl-[3px]">
        <svg width="43" height="19" viewBox="0 0 43 19">
          <path d="M1 18V14H9V11H17V8H25V5H33V1H42V18Z" fill="#0d9a33" stroke="#fff" strokeWidth="1.600" />
          <path d="M9 14V18M17 11V18M25 8V18M33 5V18" stroke="#082d12" strokeWidth="1.300" />
        </svg>
        <svg width="16" height="17" viewBox="0 0 16 17" className="ml-[14px]">
          <path d="M8 6V16M6.500 16H9.500" stroke="#fff" strokeWidth="2" /><circle cx="8" cy="5.500" r="1.800" fill="#fff" />
          <path d="M4.500 2.500Q3 5.500 4.500 8.500M11.500 2.500Q13 5.500 11.500 8.500M2 1Q0 5.500 2 10M14 1Q16 5.500 14 10" fill="none" stroke="#fff" strokeWidth="1.200" />
        </svg>
      </div>
      <div className="flex-1" />
      <div className="flex h-full shrink-0 items-center">
        <span className="mb-[3px] w-[21px] font-['Liberation_Mono',monospace] text-[12px] leading-none tracking-[-0.5px] text-white">CH</span>
        <svg width="16" height="13" viewBox="0 0 16 13" className="mb-[4px]"><path d="M4 4Q4 1 8 3T12 0" fill="none" stroke="#ccc" /><rect x=".5" y="4.500" width="15" height="8" rx="1" fill="#d9d6cf" stroke="#77736b" /><path d="M2 7H14M2 9H14M4 11H12" stroke="#66625c" strokeDasharray="1.500 1" /></svg>
        <svg width="15" height="15" viewBox="0 0 15 15" className="mb-[5px] ml-[7px]"><circle cx="7.500" cy="7.500" r="7" fill="#1d43c9" stroke="#dfe6f7" /><path d="M5.300 5.800Q5.500 3.500 7.600 3.500T9.700 5.500Q9.700 6.500 7.600 7.800V9M7.600 10.500V12" fill="none" stroke="#fff" strokeWidth="1.700" /></svg>
        <svg width="8" height="18" viewBox="0 0 8 18" className="mb-[6px] ml-[10px]"><path d="M2.500 3V.5H7.500V4.500H5M.5 2.500H5V6.500H.5Z" fill="none" stroke="#fff" /><path d="M1.500 14H6.500L4 16.500Z" fill="#fff" /></svg>
        <svg width="8" height="5" viewBox="0 0 8 5" className="ml-[11px] mt-[1px]"><path d="M0 4.500L4 0L8 4.500Z" fill="#fff" /></svg>
        <svg width="16" height="16" viewBox="0 0 16 16" className="ml-[12px] mt-[1px]"><path d="M1 1H4L6 .5Q8 1 8 3.500Q11 4 11 7L13 14H1Z" fill="#f5e6a8" stroke="#d8b13a" /><path d="M5 6Q8 4 9 8L10 11H3Z" fill="#b5cfe0" /><circle cx="11" cy="11" r="4" fill="#fff" stroke="#e03a20" strokeWidth="1.800" /><path d="M8.500 8.500L13.500 13.500" stroke="#e03a20" strokeWidth="1.600" /></svg>
        <svg width="15" height="16" viewBox="0 0 15 16" className="ml-[8px] mt-[1px]"><path d="M5 14.500H1.500V3H3.500V1.500H7.500V3H9" fill="none" stroke="#fff" strokeWidth="1.500" /><path d="M4 7V12" stroke="#fff" strokeWidth="1.500" /><path d="M5.500 6H13.500V8Q13.500 10.500 9.500 10.500T5.500 8Z" fill="#fff" /><path d="M7.500 3.500V6M11.500 3.500V6M9.500 10V13Q9.500 14.500 8 14.500H5" fill="none" stroke="#fff" strokeWidth="1.500" /></svg>
        <svg width="15" height="12" viewBox="0 0 15 12" className="ml-[10px] mt-[3px]"><path d="M1 12V10M4 12V8.500M7 12V6M10 12V3.500M13 12V0" stroke="#fff" strokeWidth="2" /></svg>
        <svg width="15" height="15" viewBox="0 0 15 15" className="ml-[9px] mt-[2px]"><path d="M0 5H3L7 0V14L3 10H0Z" fill="#f4f4f4" /><circle cx="10" cy="10.500" r="4" fill="#fff" stroke="#dd2a20" strokeWidth="1.800" /><path d="M7.500 8L12.500 13" stroke="#dd2a20" strokeWidth="1.600" /></svg>
        <span className={`${UI} ml-[23px] w-[64px] whitespace-nowrap text-[13px] leading-none tracking-[-0.4px] text-white`}>3:33 PM</span>
        <div className="h-full w-[13px] border border-[#7b879d] bg-linear-to-b from-[#5f6c86] to-[#27334f]" />
        <div className="w-px" />
      </div>
    </footer>
  );
}

export default function App() {
  return (
    <div className="flex h-[900px] w-[1600px] flex-col overflow-hidden bg-[#f0f0f0] font-['Liberation_Sans',Arial,sans-serif]">
      <GlyphDefs />
      <div className="h-[97px] shrink-0">
        <TabStrip />
        <NavBar />
        <BookmarksBar />
      </div>
      <div className="flex h-[773px] shrink-0 overflow-hidden">
        <div className="flex w-[1583px] flex-col overflow-hidden">
          <SiteHeader />
          <TitleRow />
          <div className="ml-[52px] flex h-[900px] w-[1480px] shrink-0 items-start overflow-hidden rounded-t-[7px] bg-white pl-[20px]">
            <Sidebar />
            <Main />
          </div>
        </div>
        <Scrollbar />
      </div>
      <Taskbar />
    </div>
  );
}
